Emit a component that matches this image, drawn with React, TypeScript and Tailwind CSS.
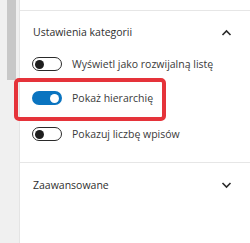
function Toggle({ on }: { on?: boolean }) {
  if (on) {
    return (
      <span className="flex h-[14px] w-[30px] shrink-0 items-center justify-end rounded-full bg-[#0a74c0] pr-[3px]">
        <span className="h-[9px] w-[9px] rounded-full bg-white" />
      </span>
    );
  }
  return (
    <span className="flex h-[14px] w-[30px] shrink-0 items-center rounded-full border border-[#2a2a2a] bg-white pl-[2px]">
      <span className="h-[9px] w-[9px] rounded-full bg-[#1e1e1e]" />
    </span>
  );
}

function ToggleRow({ label, on }: { label: string; on?: boolean }) {
  return (
    <div className="flex h-[14px] items-center gap-[10px]">
      <Toggle on={on} />
      <span className="text-[10.5px] leading-[14px] text-[#3a3a3a]">{label}</span>
    </div>
  );
}

function Chevron({ up }: { up?: boolean }) {
  return (
    <svg width="11" height="7" viewBox="0 0 11 7" fill="none" stroke="#2a2a2a" strokeWidth="1.6">
      {up ? <path d="M1.5 6l4-4 4 4" /> : <path d="M1.5 1l4 4 4-4" />}
    </svg>
  );
}

export default function App() {
  return (
    <div
      className="relative flex h-[243px] w-[250px] overflow-hidden bg-white"
      style={{ fontFamily: '"Open Sans", "Noto Sans", sans-serif' }}
    >
      <div className="w-[19px] shrink-0 bg-[#f0f0f0]">
        <div className="ml-[7px] h-[80px] w-[9px] bg-[#c8c8c8]" />
      </div>
      <div className="flex flex-1 flex-col border-l border-[#e4e4e4]">
        <div className="h-[11px] border-b border-[#e6e6e6]" />
        <div className="flex items-center justify-between pl-[13px] pr-[18px] pt-[14px]">
          <span className="text-[10.5px] leading-[14px] text-[#2f2f2f]">Ustawienia kategorii</span>
          <Chevron up />
        </div>
        <div className="mt-[18px] flex flex-col gap-[20px] pl-[12px]">
          <ToggleRow label="Wyświetl jako rozwijalną listę" />
          <ToggleRow label="Pokaż hierarchię" on />
          <div className="mt-[2px]">
            <ToggleRow label="Pokazuj liczbę wpisów" />
          </div>
        </div>
        <div className="mt-[21px] border-b border-[#e6e6e6]" />
        <div className="flex items-center justify-between pl-[13px] pr-[18px] pt-[15px]">
          <span className="text-[10.5px] leading-[14px] text-[#2f2f2f]">Zaawansowane</span>
          <Chevron />
        </div>
      </div>
      <div className="absolute left-[14px] top-[78px] h-[43px] w-[152px] rounded-[5px] border-4 border-[#e5333a]" />
    </div>
  );
}
